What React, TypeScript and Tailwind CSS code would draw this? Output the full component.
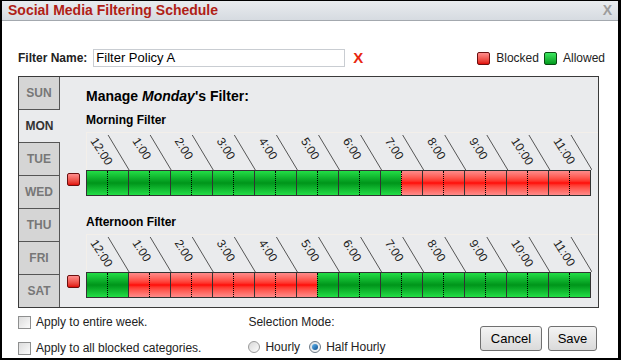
import React from 'react'

// half-hour slots: true = blocked
const MORNING = Array.from({ length: 24 }, (_, i) => i >= 15)
const AFTERNOON = Array.from({ length: 24 }, (_, i) => i >= 2 && i <= 10)

const HOURS = ['12:00', '1:00', '2:00', '3:00', '4:00', '5:00', '6:00', '7:00', '8:00', '9:00', '10:00', '11:00']
const DAYS = ['SUN', 'MON', 'TUE', 'WED', 'THU', 'FRI', 'SAT']

const BAR_W = 505
const HOUR_W = BAR_W / 12

function HourHeader() {
  return (
    <svg width={BAR_W} height={37} className="block">
      {HOURS.map((h, i) => {
        const x = i * HOUR_W
        const end = (i + 1) * HOUR_W
        return (
          <g key={h}>
            <line x1={end - 21} y1={2} x2={end} y2={37} stroke="#555" strokeWidth={1} />
            <text
              x={x + 3}
              y={8}
              fontSize={12}
              fill="#222"
              fontFamily="'Liberation Sans', Arial, sans-serif"
              transform={`rotate(57 ${x + 3} 8)`}
            >
              {h}
            </text>
          </g>
        )
      })}
    </svg>
  )
}

function FilterBar({ slots }: { slots: boolean[] }) {
  return (
    <div className="flex items-start">
      <div className="ml-[7px] mr-[6px] mt-[3px] h-[13px] w-[13px] rounded-[2px] border border-[#6b0f0f] bg-linear-to-b from-[#ff8c8c] to-[#e00000]" />
      <div className="flex h-[26px] w-[505px] border border-[#333]">
        {slots.map((blocked, i) => (
          <div
            key={i}
            className={[
              'flex-1',
              i === 0 ? '' : i % 2 === 0 ? 'border-l border-[#333]' : 'border-l border-dotted border-black',
              blocked
                ? 'bg-linear-to-b from-[#ff8a8a] via-[#ff0000] to-[#ff8a8a]'
                : 'bg-linear-to-b from-[#22de46] via-[#00951a] to-[#22de46]',
            ].join(' ')}
          />
        ))}
      </div>
    </div>
  )
}

export default function App() {
  return (
    <div
      className="h-[360px] w-[621px] bg-black pb-[2px] pl-[2px] pr-[3px] pt-[1px] text-[12px] text-[#222]"
      style={{ fontFamily: "'Liberation Sans', Arial, sans-serif" }}
    >
      <div className="flex h-full flex-col bg-white">
        {/* title bar */}
        <div className="flex h-[20px] items-center justify-between border-b border-[#a3a8ae] bg-linear-to-b from-[#e9ecef] to-[#d6dbe1] pl-[6px] pr-[6px]">
          <span className="text-[14px] font-bold text-[#b01e16]">Social Media Filtering Schedule</span>
          <span className="text-[14px] font-bold text-[#9c9c9c]">X</span>
        </div>

        <div className="flex flex-1 flex-col pl-[16px] pr-[19px]">
          {/* filter name row */}
          <div className="mr-[-6px] mt-[28px] flex h-[18px] items-center">
            <span className="font-bold">Filter Name:</span>
            <input
              defaultValue="Filter Policy A"
              className="ml-[6px] h-[18px] w-[252px] border border-[#c9cdd2] px-[2px] text-[13px] text-black outline-none"
            />
            <span className="ml-[8px] text-[15px] font-bold text-[#e8260f]">X</span>
            <div className="ml-auto flex items-center">
              <span className="h-[13px] w-[13px] rounded-[2px] border border-[#6b0f0f] bg-linear-to-b from-[#ff8c8c] to-[#e00000]" />
              <span className="ml-[6px]">Blocked</span>
              <span className="ml-[5px] h-[13px] w-[13px] rounded-[2px] border border-[#0a4a12] bg-linear-to-b from-[#3ce860] to-[#009a1c]" />
              <span className="ml-[6px]">Allowed</span>
            </div>
          </div>

          {/* schedule panel */}
          <div className="mt-[9px] flex h-[232px] border border-[#3a3a3a] bg-[#eaebed]">
            <div className="flex w-[41px] flex-col">
              {DAYS.map((d) => (
                <div
                  key={d}
                  className={[
                    'flex flex-1 items-center justify-center text-[12px] font-bold',
                    d === 'MON'
                      ? 'border-b border-[#555] text-[#333]'
                      : 'border-b border-r border-[#555] bg-[#d5d5d5] text-[#777]',
                    d === 'SAT' ? 'border-b-0' : '',
                  ].join(' ')}
                >
                  {d}
                </div>
              ))}
            </div>

            <div className="flex flex-1 flex-col">
              <div className="ml-[26px] mt-[11px] h-[16px] text-[14px] font-bold leading-[16px] text-black">
                Manage <i>Monday</i>'s Filter:
              </div>
              <div className="ml-[26px] mt-[9px] h-[14px] font-bold leading-[14px] text-black">Morning Filter</div>
              <div className="ml-[26px] mt-[5px] border-l border-t border-[#f3efea]">
                <HourHeader />
              </div>
              <FilterBar slots={MORNING} />

              <div className="ml-[26px] mt-[19px] h-[14px] font-bold leading-[14px] text-black">Afternoon Filter</div>
              <div className="ml-[26px] mt-[5px] border-l border-t border-[#f3efea]">
                <HourHeader />
              </div>
              <FilterBar slots={AFTERNOON} />
            </div>
          </div>

          {/* bottom controls */}
          <div className="flex flex-1 items-start pt-[5px]">
            <div className="flex flex-col gap-[8px]">
              <label className="flex items-center gap-[5px]">
                <span className="h-[13px] w-[13px] border border-[#8e8f8f] bg-linear-to-br from-[#dcdcdc] to-[#fbfbfb]" />
                Apply to entire week.
              </label>
              <label className="flex items-center gap-[5px]">
                <span className="h-[13px] w-[13px] border border-[#8e8f8f] bg-linear-to-br from-[#dcdcdc] to-[#fbfbfb]" />
                Apply to all blocked categories.
              </label>
            </div>

            <div className="ml-[47px] flex flex-col gap-[7px]">
              <span>Selection Mode:</span>
              <div className="flex items-center">
                <span className="h-[12px] w-[12px] rounded-full border border-[#9a9a9a] bg-linear-to-br from-[#d8d8d8] to-[#fdfdfd]" />
                <span className="ml-[5px]">Hourly</span>
                <span className="ml-[9px] flex h-[12px] w-[12px] items-center justify-center rounded-full border border-[#6d7a86] bg-linear-to-br from-[#d8dde2] to-[#fdfdfd]">
                  <span className="h-[6px] w-[6px] rounded-full bg-linear-to-br from-[#5fb6f0] to-[#0b4f8f]" />
                </span>
                <span className="ml-[5px]">Half Hourly</span>
              </div>
            </div>

            <div className="ml-auto mr-[2px] mt-[13px] flex gap-[6px]">
              <button className="h-[25px] w-[62px] rounded-[3px] border border-[#707070] bg-linear-to-b from-[#f4f4f4] to-[#dadada] text-[13px] text-black">
                Cancel
              </button>
              <button className="h-[25px] w-[49px] rounded-[3px] border border-[#707070] bg-linear-to-b from-[#f4f4f4] to-[#dadada] text-[13px] text-black">
                Save
              </button>
            </div>
          </div>
        </div>
      </div>
    </div>
  )
}
